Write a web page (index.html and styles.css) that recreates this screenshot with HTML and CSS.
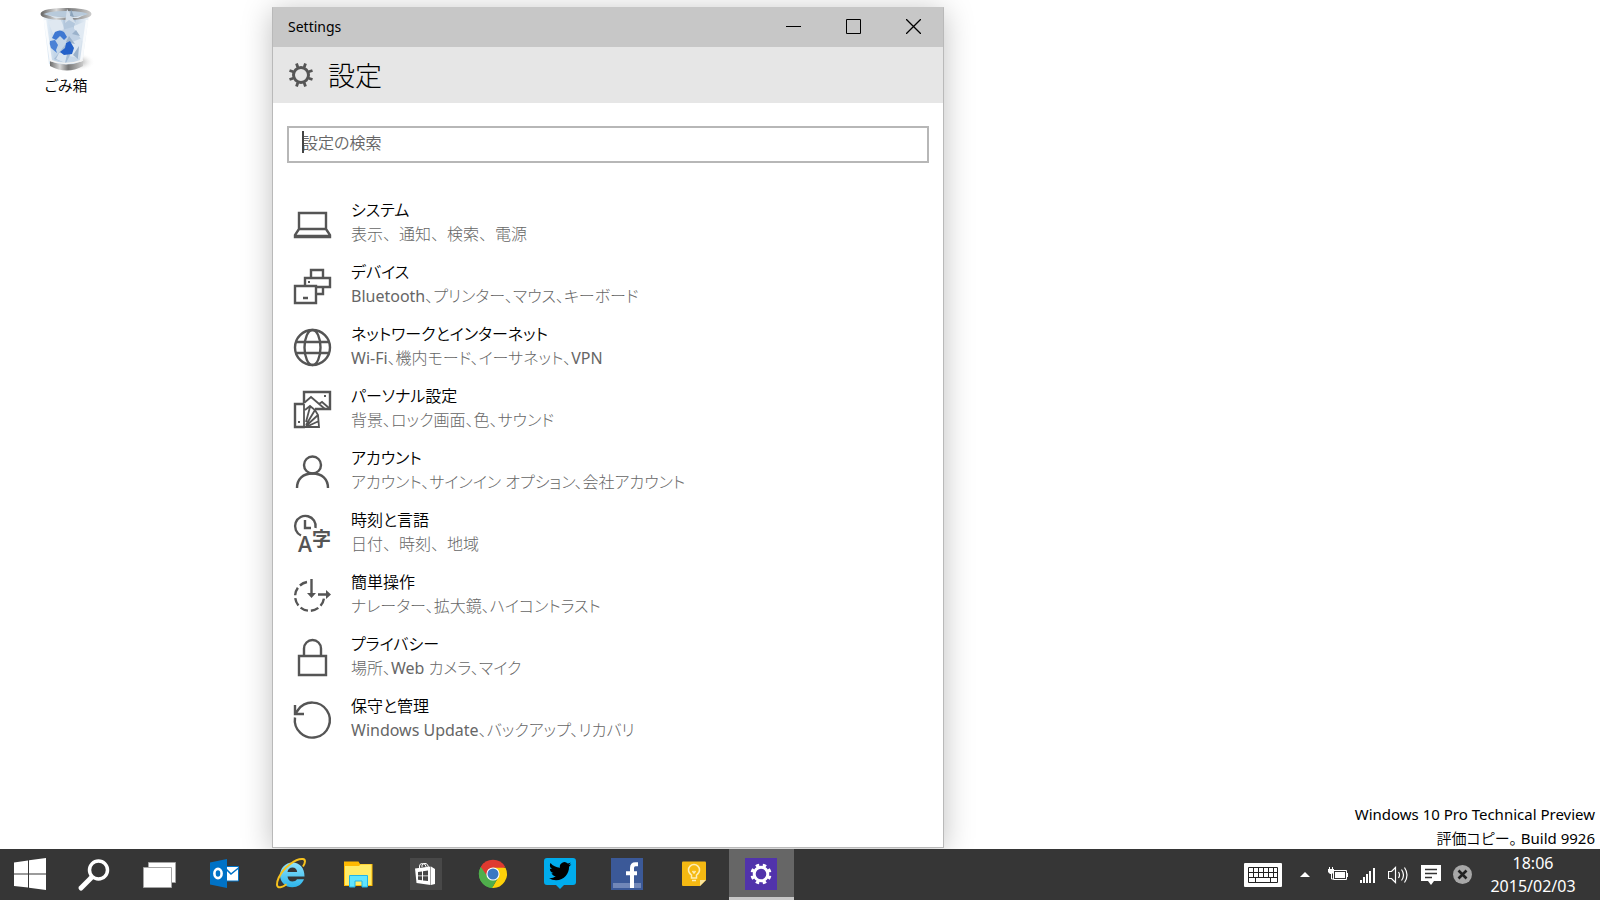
FILE: index.html
```html
<!DOCTYPE html>
<html lang="ja">
<head>
<meta charset="utf-8">
<title>Settings</title>
<link rel="stylesheet" href="styles.css">
</head>
<body class="screen">
<svg class="defs" aria-hidden="true">
  <defs>
    <linearGradient id="metal" x1="0" x2="1" y1="0" y2="0"><stop offset="0" stop-color="#6d6d6d"/><stop offset=".3" stop-color="#d8d8d8"/><stop offset=".55" stop-color="#777"/><stop offset="1" stop-color="#c9c9c9"/></linearGradient>
    <linearGradient id="glass" x1="0" x2="1" y1="0" y2="0"><stop offset="0" stop-color="#f4f9fd"/><stop offset=".25" stop-color="#c3d6e8"/><stop offset=".75" stop-color="#c9d8e7"/><stop offset="1" stop-color="#eef4f9"/></linearGradient>
    <linearGradient id="ie" x1="0" x2="0" y1="0" y2="1"><stop offset="0" stop-color="#8fe3fd"/><stop offset="1" stop-color="#2cb4ea"/></linearGradient>
    <radialGradient id="shade"><stop offset="0" stop-color="#999"/><stop offset="1" stop-color="#fff" stop-opacity="0"/></radialGradient>
  </defs>
</svg>

<main class="desktop">
  <a class="shortcut" href="#bin">
    <svg class="bin" viewBox="0 0 60 66" aria-hidden="true">
      <ellipse cx="42" cy="56" rx="17" ry="9" fill="url(#shade)"/>
      <path d="M7 9 L13 58 Q30 66 46 58 L53 9Z" fill="url(#glass)"/>
      <path d="M12 15l12-3 5 12-12 4z" fill="#dfe8f1"/><path d="M27 12l14-1-4 13-9 2z" fill="#b3c7dc"/><path d="M38 20l12-5-3 20-9-3z" fill="#e1eaf3"/>
      <path d="M22 25l15-4 8 12-12 6z" fill="#c0d1e4"/><path d="M34 37l12-5-3 20-10-2z" fill="#dce6f0"/><path d="M29 39l8 4-7 14-12-4z" fill="#a6bdd6"/><path d="M23 47l9-3-3 13-9-4z" fill="#d8e4f0"/>
      <path d="M40 24l4 6-8-2zM33 30l6 8-9-2zM37 49l6-9-1 13z" fill="#9bb2cb"/>
      <path d="M9 14l6 42M51 14l-6 42" stroke="#fff" stroke-width="2.400" opacity=".8" fill="none"/>
      <path d="M16 32l3-6q5-3 9 0l3 5-3 3-4-4-4 4z" fill="#3e78d2"/><path d="M14 35l5-1 3 5-2 5 1 3-6-5q-2-4-1-7z" fill="#4a82d6"/><path d="M34 35l4 7-2 6-8 1-4-3 5-4 1-5z" fill="#2461c9"/>
      <ellipse cx="30" cy="8" rx="24" ry="4.500" fill="#b8cadb" stroke="url(#metal)" stroke-width="3"/>
      <path d="M12 9q18 5 36 0l-6 3H19z" fill="#dbe6f0"/><path d="M31 3l5 8 4 7-7-4-4 3z" fill="#d4dfea"/><path d="M35 3l3 8-4-1z" fill="#8ca4bb"/>
      <path d="M14 55q16 7 33 0v5q-16 9-33 0z" fill="url(#metal)"/><path d="M13 54q17 7 34 0" stroke="#f3f3f3" stroke-width="1.500" fill="none"/>
    </svg>
    <span class="shortcut-name">ごみ箱</span>
  </a>

  <section class="window" aria-label="Settings">
    <div class="titlebar">
      <span class="titlebar-text">Settings</span>
      <div class="window-buttons">
        <button class="window-button" aria-label="最小化"><svg viewBox="0 0 15 15"><path d="M0 7.500h15"/></svg></button>
        <button class="window-button" aria-label="最大化"><svg viewBox="0 0 15 15"><path d="M.5.5h14v14H.5z"/></svg></button>
        <button class="window-button" aria-label="閉じる"><svg viewBox="0 0 15 15"><path stroke-width="1.300" d="M0 0l15 15M15 0L0 15"/></svg></button>
      </div>
    </div>
    <header class="header">
      <svg class="header-icon" viewBox="0 0 24 24" aria-hidden="true"><circle cx="12" cy="12" r="7.500" stroke-width="3"/><path stroke-width="2.800" d="M15.200 4.300L16.500.5M19.700 8.800L23.500 7.500M19.700 15.200L23.500 16.500M15.200 19.700L16.500 23.500M8.800 19.700L7.500 23.500M4.300 15.200L.5 16.500M4.300 8.800L.5 7.500M8.800 4.300L7.500.5"/></svg>
      <h1 class="header-title">設定</h1>
    </header>
    <div class="search">
      <input class="search-input" type="text" placeholder="設定の検索" aria-label="設定の検索">
    </div>
    <nav class="categories">
      <a class="category" href="#system">
        <svg class="category-icon" viewBox="0 0 38 38" aria-hidden="true"><path d="M6 8h27v16H6zM6 24l-4 6v2h35v-2l-4-6M2 31h35"/></svg>
        <span class="category-text"><span class="category-title">システム</span><span class="category-detail full-width">表示、通知、検索、電源</span></span>
      </a>
      <a class="category" href="#devices">
        <svg class="category-icon" viewBox="0 0 38 38" aria-hidden="true"><path d="M18 11V3h12v8M12 18v-7h25v9h-6M2 19h21v17H2zM23 20h7v7h-7M10 31h5"/><path d="M15 14h2v2h-2z" class="solid"/></svg>
        <span class="category-text"><span class="category-title">デバイス</span><span class="category-detail">Bluetooth、プリンター、マウス、キーボード</span></span>
      </a>
      <a class="category" href="#network">
        <svg class="category-icon" viewBox="0 0 38 38" aria-hidden="true"><circle cx="19.500" cy="18.500" r="17.500"/><ellipse cx="19.500" cy="18.500" rx="8" ry="17.500"/><path d="M3 13h33M3 24h33"/></svg>
        <span class="category-text"><span class="category-title">ネットワークとインターネット</span><span class="category-detail">Wi-Fi、機内モード、イーサネット、VPN</span></span>
      </a>
      <a class="category" href="#personal">
        <svg class="category-icon" viewBox="0 0 38 38" aria-hidden="true"><path d="M11 12V1h26v17H22M11 13H2v23h10"/><path stroke-width="1.800" d="M11 12l7-6 14 12M26 13l3-2 7 6M11 13v23M12 19l5-4 5 4 3 5 1 12H12M13 31l4-15M13 34l9-15M13 35l12-11M13 36l13-6"/><path d="M31 4h2v2h-2zM5 30h2v2H5z" class="solid"/></svg>
        <span class="category-text"><span class="category-title">パーソナル設定</span><span class="category-detail">背景、ロック画面、色、サウンド</span></span>
      </a>
      <a class="category" href="#accounts">
        <svg class="category-icon" viewBox="0 0 38 38" aria-hidden="true"><circle cx="19.500" cy="12" r="8.500"/><path d="M4 35c0-9 6-14.500 15.500-14.500S35 26 35 35"/></svg>
        <span class="category-text"><span class="category-title">アカウント</span><span class="category-detail">アカウント、サインイン オプション、会社アカウント</span></span>
      </a>
      <a class="category" href="#time">
        <svg class="category-icon" viewBox="0 0 38 38" aria-hidden="true"><path d="M8 20.500A10.300 10.300 0 1 1 22.500 13M12 5v8h6"/><text x="5" y="37" class="glyph-a">A</text><text x="19" y="31" class="glyph-ji">字</text></svg>
        <span class="category-text"><span class="category-title">時刻と言語</span><span class="category-detail full-width">日付、時刻、地域</span></span>
      </a>
      <a class="category" href="#ease">
        <svg class="category-icon" viewBox="0 0 38 38" aria-hidden="true"><path stroke-dasharray="8 3" d="M14 5A14.500 14.500 0 1 0 31 21"/><path d="M18.500 2v16M25 17.500h9"/><path class="solid" d="M14 16h9l-4.500 5zM33 13v9l5-4.500z"/></svg>
        <span class="category-text"><span class="category-title">簡単操作</span><span class="category-detail">ナレーター、拡大鏡、ハイコントラスト</span></span>
      </a>
      <a class="category" href="#privacy">
        <svg class="category-icon" viewBox="0 0 38 38" aria-hidden="true"><path d="M6 17h27v19H6zM11 17V9.500a8.500 8.500 0 0 1 17 0V17"/></svg>
        <span class="category-text"><span class="category-title">プライバシー</span><span class="category-detail">場所、Web カメラ、マイク</span></span>
      </a>
      <a class="category" href="#update">
        <svg class="category-icon" viewBox="0 0 38 38" aria-hidden="true"><path d="M2 16.500A17.500 17.500 0 1 0 5 9L2.500 12.500M2 4v9h9"/></svg>
        <span class="category-text"><span class="category-title">保守と管理</span><span class="category-detail">Windows Update、バックアップ、リカバリ</span></span>
      </a>
    </nav>
  </section>

  <p class="watermark">Windows 10 Pro Technical Preview<br>評価コピー。 Build 9926</p>
</main>

<footer class="taskbar">
  <div class="shell">
    <button class="shell-button start" aria-label="スタート"><svg viewBox="0 0 32 32"><path fill="#fff" d="M0 4.500l14-2V15.500H0zM15 2.300L32 0v15.500H15zM0 16.500h14v13L0 28zM15 16.500h17V32l-17-2.300z"/></svg></button>
    <button class="shell-button" aria-label="検索"><svg viewBox="0 0 32 32"><g fill="none" stroke="#fff"><circle cx="20.500" cy="12" r="9" stroke-width="3.500"/><path d="M13 20L3 30" stroke-width="5" stroke-linecap="round"/></g></svg></button>
    <button class="shell-button" aria-label="タスク ビュー"><svg viewBox="0 0 32 32"><g fill="#fff" stroke="#a5a5a5"><path d="M4.500 4.500h27v20h-27z"/><path d="M-.5 9.500h28v20h-28z"/></g></svg></button>
  </div>
  <div class="apps">
    <button class="app" aria-label="Outlook"><svg viewBox="0 0 32 32"><path d="M17 8.500h12.500v14.500H17z" fill="#fff" stroke="#0072c6"/><path d="M17 11l5 5 7.500-6" stroke="#0072c6" stroke-width="1.600" fill="none"/><path d="M1 4.500l17-3.500v29L1 26.500z" fill="#0072c6"/><ellipse cx="9" cy="15.500" rx="3.600" ry="4.600" fill="none" stroke="#fff" stroke-width="2.600"/></svg></button>
    <button class="app" aria-label="Internet Explorer"><svg viewBox="0 0 32 32"><path d="M28.500 18.500H11.500c.3 3 2.200 5 5 5 2 0 3.500-.8 4.500-2.200h7c-2 5-6.300 8-11.700 8C9.500 29.300 4 23.900 4 17.200 4 10.200 9.500 4.500 16.500 4.500S28.700 10 28.500 18.500zM11.500 14h9.700c-.3-2.600-2-4.400-4.700-4.400s-4.600 1.800-5 4.400z" fill="url(#ie)"/><path d="M27 8.500c2.500-4 2.800-7-.2-7.400C20 .3 7.500 9.500 2.800 19.500 0 25.500.2 30 4.500 29.300c2-.3 4-1.400 6-3" fill="none" stroke="#f7c21e" stroke-width="2"/></svg></button>
    <button class="app" aria-label="エクスプローラー"><svg viewBox="0 0 32 32"><path fill="#ffb900" d="M1 3.500h14.500l1.500 2.500h12.500v22H1z"/><path fill="#ffec69" d="M2 8h14l1.500-1.500h11V27H2z"/><path fill="#5fe5ff" stroke="#20b5e8" d="M6.500 17.500h18V29h-5.500v-6h-7v6H6.500z"/></svg></button>
    <button class="app" aria-label="ストア"><svg viewBox="0 0 32 32"><path fill="#484848" d="M0 0h32v32H0z"/><path d="M9.500 10.500V8q0-2.500 3-2.500t3.500 3v1M12 9V7q1-2 4-1.500 2 .5 2.500 4" fill="none" stroke="#fff"/><path fill="#fff" d="M5 10.500L20.500 8.500V27L6.500 25zM21 8.500l4 2.500v15L21 27z"/><path fill="#484848" d="M8 14l4-.6v4H8zM13 13.300l5-.8v4.900h-5zM8 18.300h4v4L8 21.700zM13 18.300h5V23l-5-.6z"/></svg></button>
    <button class="app" aria-label="Chrome"><svg viewBox="0 0 32 32"><path fill="#de3a30" d="M16 16L3.800 9A14 14 0 0 1 28.200 9z"/><path fill="#4fae4b" d="M16 16v14A14 14 0 0 1 3.800 9z"/><path fill="#fdd109" d="M16 9.800h12.500A14 14 0 0 1 15 30l6.500-11z"/><path fill="#de3a30" d="M10 18L3.800 9 7 5l9 4.800z"/><path fill="#4fae4b" d="M10.500 19.200L3.800 9A14 14 0 0 0 15 30l6.400-11z"/><circle cx="16" cy="16" r="6.600" fill="#fff"/><circle cx="16" cy="16" r="5.500" fill="#3b78c2"/></svg></button>
    <button class="app" aria-label="Twitter"><svg viewBox="0 0 32 32"><path fill="#00aced" d="M3 0h26q3 0 3 3v21q0 3-3 3h-9l-4 4-4-4H3q-3 0-3-3V3q0-3 3-3z"/><path transform="translate(5 2) scale(.93)" d="M23.953 4.570a10 10 0 01-2.825.775 4.958 4.958 0 002.163-2.723c-.951.555-2.005.959-3.127 1.184a4.920 4.920 0 00-8.384 4.482C7.690 8.095 4.067 6.130 1.640 3.162a4.822 4.822 0 00-.666 2.475c0 1.710.870 3.213 2.188 4.096a4.904 4.904 0 01-2.228-.616v.060a4.923 4.923 0 003.946 4.827 4.996 4.996 0 01-2.212.085 4.936 4.936 0 004.604 3.417 9.867 9.867 0 01-6.102 2.105c-.390 0-.779-.023-1.170-.067a13.995 13.995 0 007.557 2.209c9.053 0 13.998-7.496 13.998-13.985 0-.210 0-.420-.015-.630A9.935 9.935 0 0024 4.590z"/></svg></button>
    <button class="app" aria-label="Facebook"><svg viewBox="0 0 32 32"><path fill="#3b5998" d="M0 0h32v32H0z"/><path fill="#7187b8" d="M2 25h28v5H2z"/><path d="M27 6.200h-2.500q-3.500 0-3.500 3.800v20M15 15.200h11" stroke="#fff" stroke-width="4" fill="none"/></svg></button>
    <button class="app" aria-label="Keep"><svg viewBox="0 0 32 32"><path fill="#f5b912" d="M5 3.500h22q1 0 1 1V22l-6 6H5q-1 0-1-1V4.500q0-1 1-1z"/><path fill="#fde59a" d="M28 22l-6 6v-6z"/><path d="M13.500 20v-3q-3-2-3-5a5.500 5.500 0 0 1 11 0q0 3-3 5v3zM14 22.500h4M14.500 13l1.500 2 1.500-2" fill="none" stroke="#fdeeb6" stroke-width="1.500"/></svg></button>
    <button class="app active" aria-label="Settings"><svg viewBox="0 0 32 32"><path fill="#5133ab" d="M0 0h32v32H0z"/><g fill="none" stroke="#fff"><circle cx="16" cy="16" r="6.800" stroke-width="3"/><circle cx="16" cy="16" r="9" stroke-width="3" pathLength="16" stroke-dasharray="1 1" stroke-dashoffset="-.5"/></g></svg></button>
  </div>
  <div class="tray">
    <button class="tray-button" aria-label="タッチ キーボード"><svg width="38" height="24" viewBox="0 0 38 24"><rect width="38" height="24" rx="1" fill="#fff"/><path d="M4.500 4.500h29v15h-29zM4 9.500h30M4 14.500h30M9.500 4v10M14.500 4v10M19.500 4v10M24.500 4v10M29.500 4v10M11.500 14v6M26.500 14v6" fill="none" stroke="#222"/></svg></button>
    <button class="tray-button" aria-label="隠れているインジケーター"><svg width="10" height="24" viewBox="0 0 10 24"><path fill="#fff" d="M0 14l5-5 5 5z"/></svg></button>
    <div class="status">
      <button class="tray-button" aria-label="電源"><svg width="20" height="20" viewBox="0 0 20 20"><path d="M5.500 5.500h13v9h-13zM19.500 8v4M1.500 2v3M4.500 2v3M3.500 8v6h2" fill="none" stroke="#fff"/><path fill="#fff" d="M0 4h6v3L4 9H2L0 7zM7 7h10v6H7z"/></svg></button>
      <button class="tray-button" aria-label="ネットワーク"><svg width="16" height="20" viewBox="0 0 16 20"><path fill="#fff" d="M0 15h2v3H0zM3 12h2v6H3zM6 9h2v9H6zM9 6h2v12H9zM13 3h2v15h-2z"/></svg></button>
      <button class="tray-button" aria-label="音量"><svg width="21" height="20" viewBox="0 0 21 20"><path d="M.5 6.500h3l4-4v15l-4-4h-3zM10.500 7q2 3 0 6M13.500 4.500q4 5.500 0 11M16.500 2.500q5 7.500 0 15" fill="none" stroke="#fff" stroke-width="1.200"/></svg></button>
      <button class="tray-button" aria-label="通知"><svg width="20" height="20" viewBox="0 0 20 20"><path fill="#fff" d="M0 0h20v16h-7l-3 4-3-4H0z"/><path d="M4 4.500h12M4 8.500h12M4 12.500h7" stroke="#333" stroke-width="1.500"/></svg></button>
      <button class="tray-button" aria-label="入力オフ"><svg width="19" height="19" viewBox="0 0 19 19"><circle cx="9.500" cy="9.500" r="9.500" fill="#a8a8a8"/><path d="M5.500 5.500l8 8M13.500 5.500l-8 8" stroke="#222" stroke-width="2.600"/></svg></button>
    </div>
    <time class="clock" datetime="2015-02-03T18:06"><span>18:06</span><span>2015/02/03</span></time>
  </div>
</footer>
</body>
</html>
```

FILE: styles.css
```css
* {
  box-sizing: border-box;
}

.screen {
  margin: 0;
  min-height: 100vh;
  display: flex;
  flex-direction: column;
  background: #fff;
  color: #000;
  font-family: "Noto Sans", "Noto Sans CJK JP DemiLight", "Noto Sans CJK JP", sans-serif;
  font-feature-settings: "palt";
  font-size: 16px;
  line-height: 24px;
}

button {
  border: 0;
  padding: 0;
  background: none;
  color: inherit;
  display: flex;
  align-items: center;
  justify-content: center;
}

a {
  color: inherit;
  text-decoration: none;
}

.defs {
  position: absolute;
  width: 0;
  height: 0;
}

.desktop {
  position: relative;
  flex: 1;
  display: flex;
  overflow: hidden;
  padding: 7px 41% 1px 17%;
}

.shortcut {
  position: absolute;
  left: 16px;
  top: 6px;
  width: 100px;
  display: flex;
  flex-direction: column;
  align-items: center;
  font-size: 15px;
}

.bin {
  width: 60px;
  height: 66px;
}

.shortcut-name {
  line-height: 26px;
}

.window {
  flex: 1;
  display: flex;
  flex-direction: column;
  border: 1px solid #b9b9b9;
  border-top-color: #c7c7c7;
  background: #fff;
  box-shadow: 0 4px 28px rgba(0, 0, 0, 0.25);
}

.titlebar {
  display: flex;
  align-items: center;
  justify-content: space-between;
  height: 39px;
  padding: 0 0 2px 15px;
  background: #c7c7c7;
  font-size: 14px;
}

.window-buttons {
  display: flex;
  height: 100%;
}

.window-button {
  width: 60px;
}

.window-button svg {
  width: 15px;
  height: 15px;
  fill: none;
  stroke: #000;
}

.header {
  display: flex;
  align-items: center;
  gap: 15px;
  height: 56px;
  padding: 0 16px;
  background: #e6e6e6;
}

.header-icon {
  width: 24px;
  height: 24px;
  fill: none;
  stroke: #555;
}

.header-title {
  margin: 0;
  font-family: "Noto Sans CJK JP", sans-serif;
  font-size: 27px;
  font-weight: 300;
  line-height: 40px;
}

.search {
  position: relative;
  margin: 23px 14px 30px;
}

.search::before {
  content: "";
  position: absolute;
  left: 15px;
  top: 5px;
  width: 2px;
  height: 22px;
  background: #444;
}

.search-input {
  display: block;
  width: 100%;
  height: 37px;
  padding: 0 13px 4px;
  border: 2px solid #b7b7b7;
  border-radius: 0;
  outline: 0;
  background: #fff;
  font: inherit;
}

.search-input::placeholder {
  color: #666;
  opacity: 1;
}

.categories {
  display: flex;
  flex-direction: column;
}

.category {
  display: flex;
  align-items: center;
  gap: 20px;
  height: 62px;
  padding: 0 20px;
}

.category-icon {
  flex: none;
  width: 38px;
  height: 38px;
  overflow: visible;
  fill: none;
  stroke: #555;
  stroke-width: 2.4;
}

.category-icon .solid,
.category-icon text {
  fill: #555;
  stroke: none;
}

.glyph-a {
  font-family: "Open Sans", sans-serif;
  font-size: 21px;
  font-weight: 600;
}

.glyph-ji {
  font-family: "Noto Sans CJK JP", sans-serif;
  font-size: 19px;
  font-weight: 700;
}

.category-text {
  display: flex;
  flex-direction: column;
  padding-bottom: 4px;
}

.category-detail {
  color: #666;
  font-family: "Noto Sans", "Noto Sans CJK JP Light", "Noto Sans CJK JP", sans-serif;
}

.full-width {
  font-feature-settings: normal;
}

.watermark {
  position: absolute;
  right: 5px;
  bottom: -1px;
  margin: 0;
  text-align: right;
  font-size: 15px;
}

.taskbar {
  display: flex;
  height: 51px;
  background: #363636;
  color: #fff;
}

.shell {
  display: flex;
}

.shell-button,
.app {
  padding: 0 1px 2px 0;
}

.shell-button {
  width: 66px;
}

.start {
  width: 61px;
}

.shell-button svg,
.app svg {
  width: 32px;
  height: 32px;
  overflow: visible;
}

.apps {
  display: flex;
  gap: 2px;
}

.app {
  width: 65px;
}

.active {
  background: #666;
  box-shadow: inset 0 -3px #c8c8c8;
}

.tray {
  display: flex;
  align-items: center;
  gap: 18px;
  margin-left: auto;
  padding-right: 24px;
}

.status {
  display: flex;
  align-items: center;
  gap: 12px;
}

.clock {
  display: flex;
  flex-direction: column;
  width: 86px;
  text-align: center;
  line-height: 23px;
  font-size: 16px;
}
```
